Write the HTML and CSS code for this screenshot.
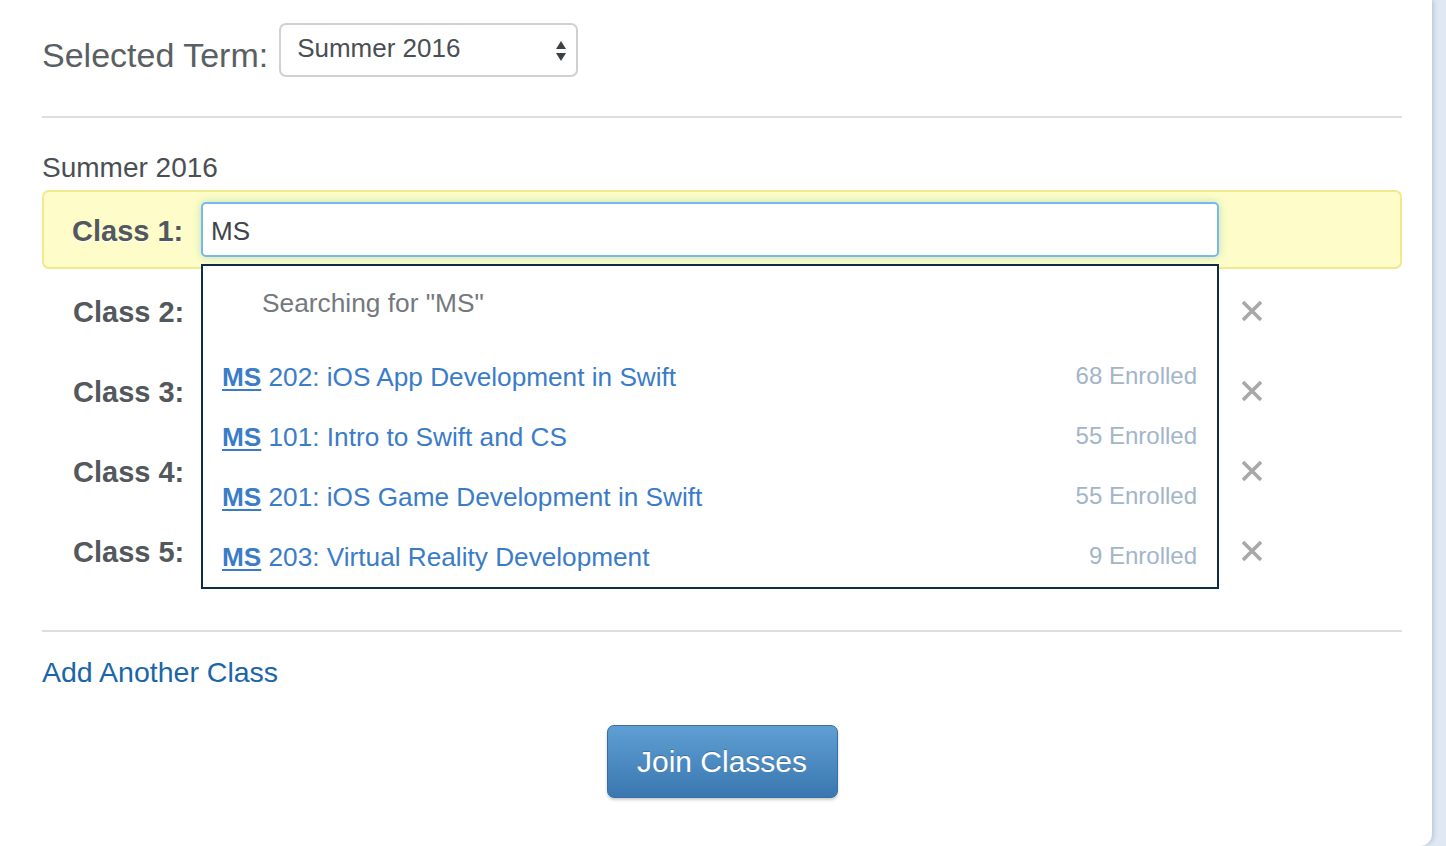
FILE: index.html
```html
<!DOCTYPE html>
<html>
<head>
<meta charset="utf-8">
<link rel="stylesheet" href="styles.css">
</head>
<body>
<div class="card">
  <div class="term-row">
    <span class="term-label">Selected Term:</span>
    <div class="select">
      <span>Summer 2016</span>
      <svg class="arrows" width="10" height="22" viewBox="0 0 10 22"><path d="M5 1 L10 9 L0 9 Z M0 13 L10 13 L5 21 Z" fill="#3c4145"/></svg>
    </div>
  </div>
  <div class="rule first"></div>
  <div class="term-heading">Summer 2016</div>
  <div class="class-list">
    <div class="class-row active">
      <span class="class-label">Class 1:</span>
      <div class="class-input">MS</div>
    </div>
    <div class="class-row">
      <span class="class-label">Class 2:</span>
      <div class="class-slot"></div>
      <svg class="remove" width="22" height="22" viewBox="0 0 22 22"><path d="M2 2 L20 20 M20 2 L2 20" stroke="#a8a8a8" stroke-width="3.6"/></svg>
    </div>
    <div class="class-row">
      <span class="class-label">Class 3:</span>
      <div class="class-slot"></div>
      <svg class="remove" width="22" height="22" viewBox="0 0 22 22"><path d="M2 2 L20 20 M20 2 L2 20" stroke="#a8a8a8" stroke-width="3.6"/></svg>
    </div>
    <div class="class-row">
      <span class="class-label">Class 4:</span>
      <div class="class-slot"></div>
      <svg class="remove" width="22" height="22" viewBox="0 0 22 22"><path d="M2 2 L20 20 M20 2 L2 20" stroke="#a8a8a8" stroke-width="3.6"/></svg>
    </div>
    <div class="class-row">
      <span class="class-label">Class 5:</span>
      <div class="class-slot"></div>
      <svg class="remove" width="22" height="22" viewBox="0 0 22 22"><path d="M2 2 L20 20 M20 2 L2 20" stroke="#a8a8a8" stroke-width="3.6"/></svg>
    </div>
    <div class="dropdown">
      <div class="searching">Searching for "MS"</div>
      <div class="result"><a class="result-name"><b>MS</b> 202: iOS App Development in Swift</a><span class="enrolled">68 Enrolled</span></div>
      <div class="result"><a class="result-name"><b>MS</b> 101: Intro to Swift and CS</a><span class="enrolled">55 Enrolled</span></div>
      <div class="result"><a class="result-name"><b>MS</b> 201: iOS Game Development in Swift</a><span class="enrolled">55 Enrolled</span></div>
      <div class="result"><a class="result-name"><b>MS</b> 203: Virtual Reality Development</a><span class="enrolled">9 Enrolled</span></div>
    </div>
  </div>
  <div class="rule second"></div>
  <a class="add-link">Add Another Class</a>
  <div class="actions">
    <button class="join-btn">Join Classes</button>
  </div>
</div>
</body>
</html>
```
FILE: styles.css
```css
html, body {
  margin: 0;
  padding: 0;
  height: 846px;
  overflow: hidden;
}
body {
  background: #dfe8f3;
  font-family: "Liberation Sans", Arial, Helvetica, sans-serif;
}
.card {
  width: 1432px;
  height: 846px;
  box-sizing: border-box;
  background: #ffffff;
  border-bottom-right-radius: 12px;
  box-shadow: 2px 0 4px rgba(120, 140, 160, 0.35);
  padding: 23px 30px 0 42px;
}
.term-row {
  display: flex;
  align-items: center;
  height: 54px;
}
.term-label {
  font-size: 34px;
  color: #5a5f64;
  margin-right: 11px;
  padding-top: 10px;
}
.select {
  box-sizing: border-box;
  width: 299px;
  height: 54px;
  border: 2px solid #d0d0d0;
  border-radius: 7px;
  display: flex;
  align-items: center;
  justify-content: space-between;
  padding: 0 10px 0 16px;
  font-size: 26px;
  color: #4a4f54;
}
.select span {
  margin-top: -3px;
}
.arrows {
  margin-top: 2px;
}
.rule {
  height: 2px;
  background: #dedede;
}
.rule.first {
  margin-top: 39px;
}
.term-heading {
  margin-top: 34px;
  font-size: 28px;
  line-height: 32px;
  color: #4a4f54;
}
.class-list {
  position: relative;
  margin-top: 6px;
}
.class-row {
  box-sizing: border-box;
  height: 80px;
  display: flex;
  align-items: center;
  padding-left: 30px;
  border: 1px solid transparent;
}
.class-row.active {
  background: #fefdc9;
  border: 2px solid #f0ea8c;
  border-radius: 7px;
  padding-left: 28px;
  height: 79px;
  margin-bottom: 1px;
}
.class-label {
  width: 129px;
  font-size: 29px;
  font-weight: bold;
  color: #53585d;
  text-shadow: 0 1px 0 #ffffff;
  padding-top: 4px;
}
.class-input {
  box-sizing: border-box;
  width: 1018px;
  height: 55px;
  background: #ffffff;
  border: 2px solid #78b8ee;
  border-radius: 5px;
  box-shadow: 0 0 8px rgba(120, 200, 170, 0.5);
  font-size: 26px;
  color: #3f4448;
  display: flex;
  align-items: center;
  padding: 4px 0 0 8px;
}
.class-slot {
  width: 1018px;
  height: 55px;
}
.remove {
  margin-left: 21px;
  margin-top: 2px;
}
.dropdown {
  position: absolute;
  top: 74px;
  left: 159px;
  width: 1018px;
  box-sizing: border-box;
  border: 2px solid #0e2d47;
  background: #ffffff;
}
.searching {
  height: 81px;
  box-sizing: border-box;
  padding: 20px 0 0 59px;
  font-size: 26.3px;
  line-height: 34px;
  color: #74797e;
}
.result {
  height: 60px;
  display: flex;
  align-items: center;
  justify-content: space-between;
  padding: 0 20px 0 19px;
}
.result-name {
  color: #3b7cc9;
  font-size: 26.2px;
}
.result-name b {
  text-decoration: underline;
  text-underline-offset: 3px;
}
.enrolled {
  color: #a2b5c9;
  font-size: 24px;
  margin-top: -2px;
}
.rule.second {
  margin-top: 40px;
}
.add-link {
  display: block;
  margin-top: 24px;
  font-size: 28.5px;
  line-height: 32px;
  color: #1a66a8;
}
.actions {
  display: flex;
  justify-content: center;
  margin-top: 37px;
  padding-right: 30px;
}
.join-btn {
  width: 231px;
  height: 73px;
  border: 1px solid #346fa6;
  border-radius: 7px;
  background: linear-gradient(#5f9fd3, #3a77b0);
  box-shadow: 0 2px 3px rgba(0, 0, 0, 0.2);
  color: #ffffff;
  font-family: "Liberation Sans", Arial, sans-serif;
  font-size: 30px;
  text-shadow: 0 -1px 0 rgba(0, 0, 0, 0.2);
  margin-left: 30px;
  padding: 0;
}
```
